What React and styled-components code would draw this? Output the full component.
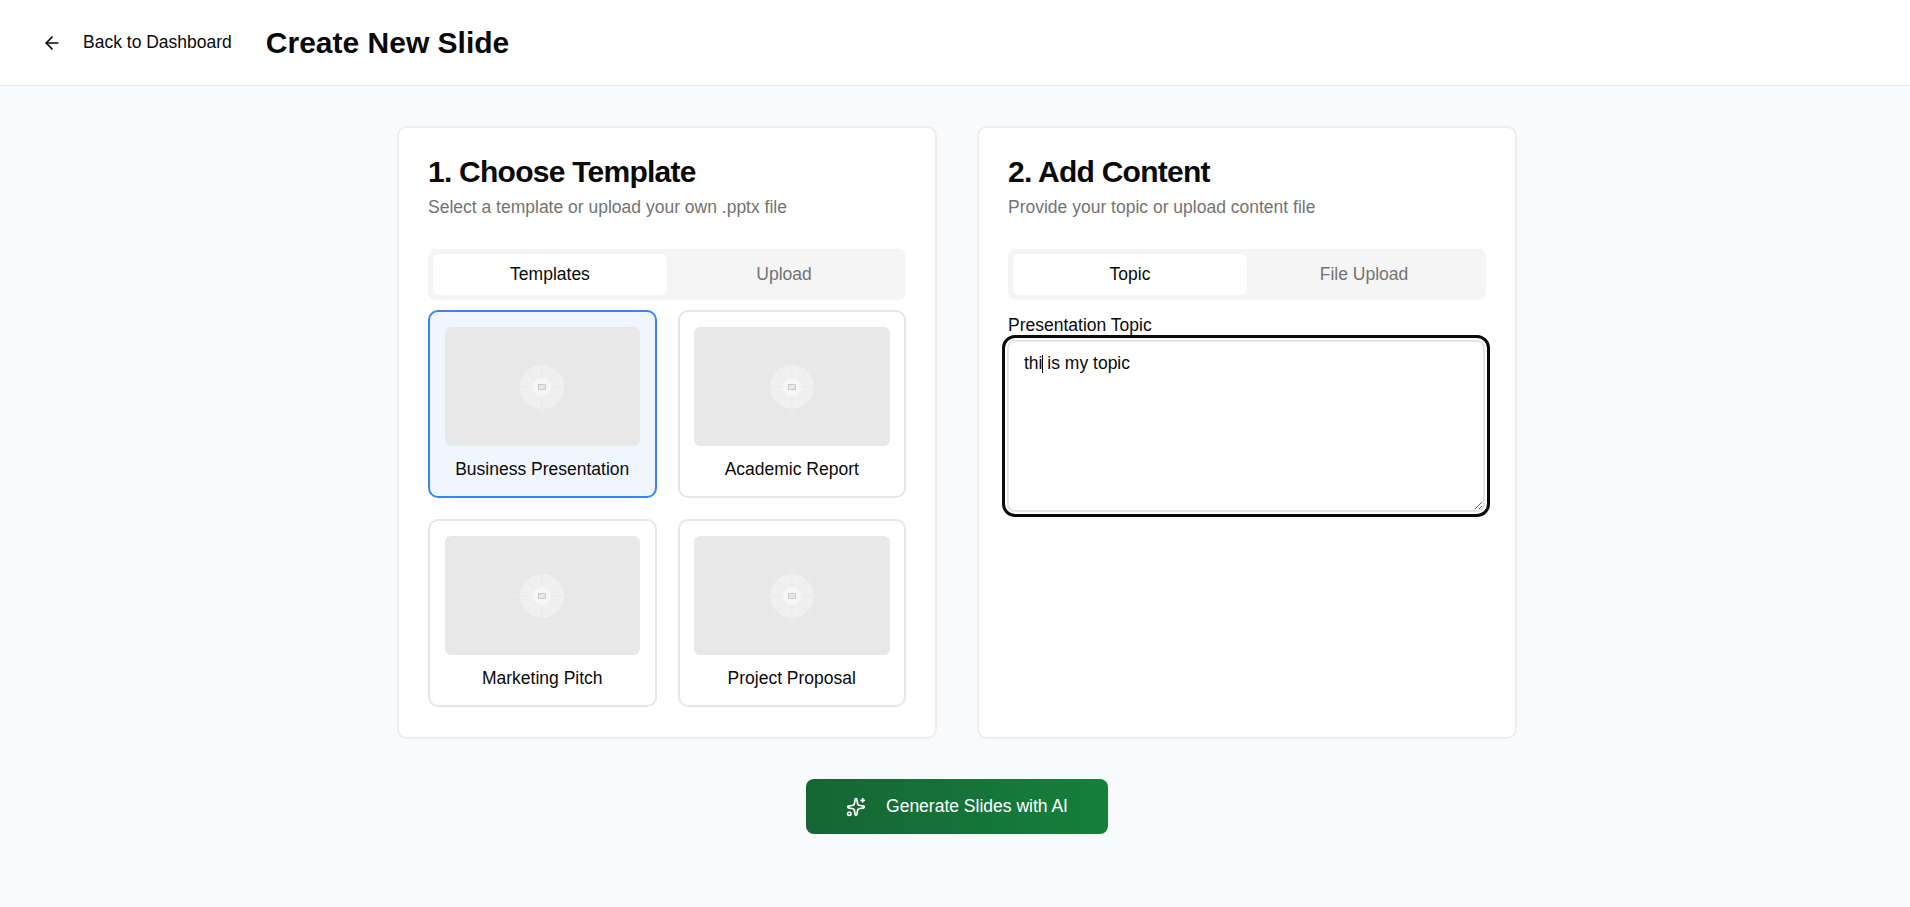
import React, { useEffect, useRef } from "react";
import styled, { createGlobalStyle } from "styled-components";
import { ArrowLeft, Sparkles } from "lucide-react";

const Global = createGlobalStyle`
  html, body { margin: 0; padding: 0; background: #f9fafb; }
  body { font-family: "Liberation Sans", Arial, sans-serif; color: #0a0a0a; }
  * { box-sizing: border-box; }
`;

const Page = styled.div`
  min-height: 907px;
  background: #f9fafb;
  display: flex;
  flex-direction: column;
`;
const Header = styled.header`
  height: 86px;
  background: #fff;
  border-bottom: 1px solid #e5e7eb;
  display: flex;
  align-items: center;
  padding: 0 32px;
  gap: 22px;
`;
const BackButton = styled.button`
  display: flex;
  align-items: center;
  gap: 21px;
  height: 40px;
  padding: 0 12px 0 10px;
  border: 0;
  background: none;
  font: 400 17.5px "Liberation Sans", Arial, sans-serif;
  color: #0a0a0a;
`;
const PageTitle = styled.h1`
  margin: 0;
  font-size: 30px;
  line-height: 36px;
  font-weight: 700;
`;
const Main = styled.main`
  width: 1120px;
  margin: 40px auto 0;
  transform: translateX(2px);
`;
const Columns = styled.div`
  display: grid;
  grid-template-columns: 1fr 1fr;
  gap: 40px;
`;
const Panel = styled.section`
  height: 613px;
  background: #fff;
  border: 2px solid #eceef1;
  border-radius: 10px;
  padding: 26px 29px;
  display: flex;
  flex-direction: column;
`;
const PanelTitle = styled.h2`
  margin: 0;
  font-size: 30px;
  line-height: 36px;
  font-weight: 700;
  letter-spacing: -0.75px;
`;
const PanelSubtitle = styled.p`
  margin: 5px 0 0;
  font-size: 17.5px;
  line-height: 24px;
  color: #737373;
`;
const Tabs = styled.div`
  margin-top: 30px;
  height: 51px;
  padding: 5px;
  display: grid;
  grid-template-columns: 1fr 1fr;
  background: #f5f5f5;
  border-radius: 8px;
`;
const Tab = styled.div`
  display: flex;
  align-items: center;
  justify-content: center;
  border-radius: 6px;
  font-size: 17.5px;
  background: ${(p) => (p.$active ? "#fff" : "transparent")};
  color: ${(p) => (p.$active ? "#0a0a0a" : "#737373")};
`;
const TemplateGrid = styled.div`
  margin-top: 10px;
  display: grid;
  grid-template-columns: 1fr 1fr;
  gap: 21px;
`;
const TemplateCard = styled.div`
  height: 188px;
  padding: 15px 14.5px;
  border: 2px solid ${(p) => (p.$selected ? "#3b82f6" : "#e5e7eb")};
  border-radius: 10px;
  background: ${(p) => (p.$selected ? "#eff6ff" : "#fff")};
  display: flex;
  flex-direction: column;
  align-items: center;
`;
const Thumb = styled.div`
  width: 100%;
  height: 121px;
  border-radius: 6px;
  background: #e8e8e8;
  display: flex;
  align-items: center;
  justify-content: center;
`;
const CardLabel = styled.div`
  margin-top: 11px;
  font-size: 17.5px;
  line-height: 24px;
`;
const Label = styled.label`
  display: block;
  margin-top: 15px;
  font-size: 17.5px;
  line-height: 20px;
`;
const TextWrap = styled.div`
  position: relative;
  margin: 5px 1px 0 -1px;
`;
const TextArea = styled.textarea`
  display: block;
  width: 100%;
  height: 172px;
  padding: 9px 15px;
  border: 2px solid #e5e5e5;
  border-radius: 8px;
  font: 400 17.5px/24px "Liberation Sans", Arial, sans-serif;
  color: #0a0a0a;
  caret-color: transparent;
  background: #fff;
  resize: vertical;
  outline: 3px solid #0a0a0a;
  outline-offset: 2px;
`;
const Caret = styled.span`
  position: absolute;
  left: 35px;
  top: 15px;
  width: 1px;
  height: 18px;
  background: #0a0a0a;
  pointer-events: none;
`;
const Footer = styled.div`
  display: flex;
  justify-content: center;
  margin-top: 40px;
`;
const GenerateButton = styled.button`
  width: 302px;
  height: 55px;
  border: 0;
  border-radius: 8px;
  background: linear-gradient(90deg, #166534, #15803d);
  color: #fff;
  display: flex;
  align-items: center;
  justify-content: center;
  gap: 20px;
  font: 400 17.5px "Liberation Sans", Arial, sans-serif;
`;

const Placeholder = () => (
  <svg width="90" height="70" viewBox="-45 -35 90 70" fill="none">
    <path d="M0 -30V30M-30 0H30M-31 -31L31 31M-31 31L31 -31" stroke="#ededed" strokeWidth="1" />
    <circle r="22" fill="#f0f0f0" />
    <path d="M0 -22V22M-22 0H22M-15.5 -15.5L15.5 15.5M-15.5 15.5L15.5 -15.5" stroke="#e9e9e9" strokeWidth="1" />
    <circle r="9" fill="#f6f6f6" />
    <rect x="-3.5" y="-2.5" width="7" height="5" fill="#e2e2e2" stroke="#c4c4c4" strokeWidth="0.8" />
    <path d="M-3 2L-0.5 0L3 -2" stroke="#f5f5f5" strokeWidth="0.8" />
  </svg>
);

const templates = ["Business Presentation", "Academic Report", "Marketing Pitch", "Project Proposal"];

export default function App() {
  const ref = useRef(null);
  useEffect(() => {
    if (ref.current) {
      ref.current.focus();
      ref.current.setSelectionRange(3, 3);
    }
  }, []);
  return (
    <Page>
      <Global />
      <Header>
        <BackButton>
          <ArrowLeft size={20} strokeWidth={2} />
          Back to Dashboard
        </BackButton>
        <PageTitle>Create New Slide</PageTitle>
      </Header>
      <Main>
        <Columns>
          <Panel>
            <PanelTitle>1. Choose Template</PanelTitle>
            <PanelSubtitle>Select a template or upload your own .pptx file</PanelSubtitle>
            <Tabs>
              <Tab $active>Templates</Tab>
              <Tab>Upload</Tab>
            </Tabs>
            <TemplateGrid>
              {templates.map((t, i) => (
                <TemplateCard key={t} $selected={i === 0}>
                  <Thumb><Placeholder /></Thumb>
                  <CardLabel>{t}</CardLabel>
                </TemplateCard>
              ))}
            </TemplateGrid>
          </Panel>
          <Panel>
            <PanelTitle>2. Add Content</PanelTitle>
            <PanelSubtitle>Provide your topic or upload content file</PanelSubtitle>
            <Tabs>
              <Tab $active>Topic</Tab>
              <Tab>File Upload</Tab>
            </Tabs>
            <Label>Presentation Topic</Label>
            <TextWrap>
              <TextArea ref={ref} defaultValue="thi is my topic" />
              <Caret />
            </TextWrap>
          </Panel>
        </Columns>
        <Footer>
          <GenerateButton>
            <Sparkles size={20} strokeWidth={2} />
            Generate Slides with AI
          </GenerateButton>
        </Footer>
      </Main>
    </Page>
  );
}
